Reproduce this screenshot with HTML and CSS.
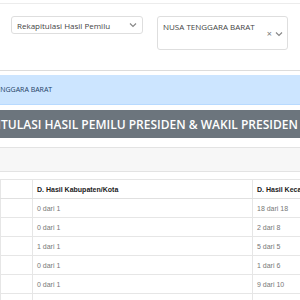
FILE: index.html
```html
<!DOCTYPE html>
<html lang="id">
<head>
    <meta charset="UTF-8">
    <meta name="viewport" content="width=device-width, initial-scale=1.0">
    <title>Rekapitulasi Hasil Pemilu</title>
    <link rel="stylesheet" href="styles.css">
</head>
<body>
    <div class="filters">
        <div class="select">
            <span>Rekapitulasi Hasil Pemilu</span>
            <svg class="chevron" width="8" height="6" viewBox="0 0 8 6"><path d="M1 1.5l3 3 3-3" fill="none" stroke="#888" stroke-width="1.2"/></svg>
        </div>
        <div class="select select-multi">
            <span>NUSA TENGGARA BARAT</span>
            <div class="select-icons">
                <span class="clear">&times;</span>
                <svg class="chevron" width="8" height="6" viewBox="0 0 8 6"><path d="M1 1.5l3 3 3-3" fill="none" stroke="#888" stroke-width="1.2"/></svg>
            </div>
        </div>
    </div>

    <div class="alert"><span class="alert-text">NUSA TENGGARA BARAT</span></div>

    <div class="title-bar"><span class="title-text">REKAPITULASI HASIL PEMILU PRESIDEN &amp; WAKIL PRESIDEN</span></div>

    <div class="card">
        <div class="card-header"></div>
        <div class="card-body">
            <table class="recap">
                <thead>
                    <tr>
                        <th class="col-name"></th>
                        <th class="col-kab">D. Hasil Kabupaten/Kota</th>
                        <th class="col-kec">D. Hasil Kecamatan</th>
                    </tr>
                </thead>
                <tbody>
                    <tr><td></td><td>0 dari 1</td><td>18 dari 18</td></tr>
                    <tr><td></td><td>0 dari 1</td><td>2 dari 8</td></tr>
                    <tr><td></td><td>1 dari 1</td><td>5 dari 5</td></tr>
                    <tr><td></td><td>0 dari 1</td><td>1 dari 6</td></tr>
                    <tr><td></td><td>0 dari 1</td><td>9 dari 10</td></tr>
                    <tr><td></td><td>0 dari 1</td><td>4 dari 12</td></tr>
                </tbody>
            </table>
        </div>
    </div>
</body>
</html>
```

FILE: styles.css
```css
body {
    margin: 0;
    width: 300px;
    height: 300px;
    overflow: hidden;
    background-color: #fff;
    font-family: "Open Sans", sans-serif;
    color: #333;
}
.filters {
    margin-top: 3px;
    border-top: 1px solid #ececec;
    border-bottom: 1px solid #dcdcdc;
    height: 68px;
    box-sizing: border-box;
    padding: 12px 11px 0;
    display: flex;
    gap: 14px;
    align-items: flex-start;
}
.select {
    width: 132px;
    height: 18px;
    box-sizing: border-box;
    border: 1px solid #dedede;
    border-radius: 3px;
    padding: 0 5px;
    display: flex;
    align-items: center;
    justify-content: space-between;
    font-size: 8px;
    color: #444;
}
.select-multi {
    width: 131px;
    height: 34px;
    align-items: flex-start;
    padding-top: 4px;
    position: relative;
}
.select-icons {
    position: absolute;
    right: 4px;
    top: 13px;
    display: flex;
    align-items: center;
    gap: 3px;
}
.clear {
    font-size: 9px;
    color: #777;
    line-height: 8px;
}
.alert {
    margin-top: 4px;
    height: 30px;
    box-sizing: border-box;
    background-color: #cce5ff;
    border-bottom: 1px solid #b8daff;
    display: flex;
    align-items: center;
    font-size: 7px;
    color: #1d3f66;
    white-space: nowrap;
}
.alert-text {
    margin-left: -28px;
}
.title-bar {
    margin-top: 5px;
    height: 28px;
    background-color: #6c757d;
    display: flex;
    align-items: center;
    white-space: nowrap;
    overflow: hidden;
}
.title-text {
    margin-left: -40px;
    color: #fff;
    font-weight: 600;
    font-size: 12px;
}
.card {
    margin-top: 9px;
    border-top: 1px solid #e3e3e3;
}
.card-header {
    height: 23px;
    background-color: #f7f7f7;
    border-bottom: 1px solid #e3e3e3;
}
.card-body {
    padding-top: 7px;
}
.recap {
    border-collapse: collapse;
    table-layout: fixed;
    width: 372px;
    font-family: "Liberation Sans", Arial, sans-serif;
    font-size: 7px;
}
.recap th, .recap td {
    height: 19px;
    box-sizing: border-box;
    padding: 0 4px;
    text-align: left;
    border-top: 1px solid #e6e6e6;
    border-left: 1px solid #e6e6e6;
}
.recap th {
    color: #222;
    font-weight: bold;
    border-bottom: 1px solid #e0e0e0;
}
.recap td {
    color: #777;
}
.col-name {
    width: 32px;
}
.col-kab {
    width: 220px;
}
.col-kec {
    width: 120px;
}
```
